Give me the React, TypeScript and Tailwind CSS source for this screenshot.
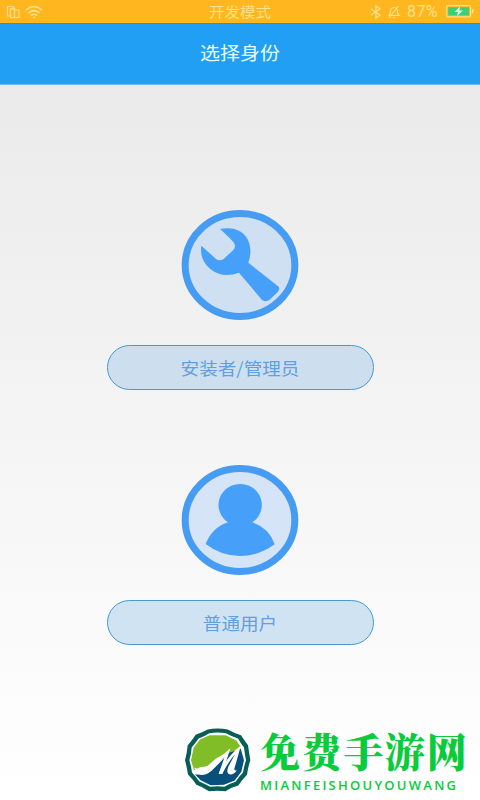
import React from "react";

const StatusBar = () => (
  <div className="relative flex h-[23px] shrink-0 items-center justify-between bg-[#ffb61f] px-[6px] text-[#ffe08c]">
    <div className="flex items-center gap-[5px]">
      <svg className="h-[14px] w-[14px]" viewBox="0 0 14 14" fill="none" stroke="currentColor" strokeWidth="1.2">
        <path d="M4 11H1.5V1.5H7L8.5 3.5" />
        <path d="M4.5 3.8H8.5V12.5H4.5ZM8.5 5H13V12.5H8.5" />
      </svg>
      <svg className="h-[14px] w-[18px]" viewBox="0 0 18 14" fill="none" stroke="currentColor" strokeWidth="1.6" strokeLinecap="round">
        <path d="M1.5 4.6Q9 -1.6 16.5 4.6M4 7.6Q9 3.6 14 7.6M6.4 10.2Q9 8.2 11.6 10.2" />
        <circle cx="9" cy="12.5" r="0.9" fill="currentColor" stroke="none" />
      </svg>
    </div>
    <span className="absolute inset-x-0 top-0 scale-y-90 text-center text-[15.5px] leading-[22px]">开发模式</span>
    <div className="flex items-center">
      <svg className="mr-[5px] h-[14px] w-[12px]" viewBox="0 0 12 14" fill="none" stroke="currentColor" strokeWidth="1.3">
        <path d="M1 4L10 10L6 13V1L10 4L1 10" />
      </svg>
      <svg className="mr-[6px] h-[14px] w-[14px]" viewBox="0 0 14 14" fill="none" stroke="currentColor" strokeWidth="1.2">
        <path d="M2 10.5Q3.5 9 3.5 6Q4 2.5 7 2.5Q10 2.5 10.5 6Q10.5 9 12 10.5ZM6 12.5H8M11.5 1L2 13" />
      </svg>
      <span className="mr-[6px] w-[33px] font-['Roboto'] text-[16px] leading-[22px] tracking-[0.4px]">87%</span>
      <svg className="h-[13px] w-[28px]" viewBox="0 0 28 13">
        <rect x="0.6" y="0.6" width="24" height="11.3" rx="1.5" fill="none" stroke="currentColor" strokeWidth="1.2" />
        <rect x="2.3" y="2.2" width="20.6" height="8.2" fill="#3cce78" />
        <path d="M26 4H27.4V8.5H26Z" fill="currentColor" />
        <path d="M14 1.5L8.5 7H12L11 11L17 5.5H13.5Z" fill="#e4ffdc" />
      </svg>
    </div>
  </div>
);

const Ring = ({ fill, children }: { fill: string; children: React.ReactNode }) => (
  <svg className="h-[110px] w-[118px]" viewBox="33 30 354 330">
    <ellipse cx="210" cy="195" rx="164.5" ry="154.5" fill={fill} stroke="#469cf2" strokeWidth="21" />
    <g fill="#469ff8">{children}</g>
  </svg>
);

const RoleButton = ({ className, children }: { className: string; children: React.ReactNode }) => (
  <button
    className={`mt-[25px] h-[45px] w-[267px] rounded-full border border-[#4798d2] text-[18.6px] text-[#5f9fe2] ${className}`}
  >
    <span className="inline-block scale-y-92">{children}</span>
  </button>
);

const Watermark = () => (
  <div className="flex pl-[184px] text-[#09cb3b]">
    <svg className="h-[65px] w-[67px] shrink-0" viewBox="27 26 201 194">
      <path
        d="M98 30Q128 24 158 30Q176 40 198 47Q208 62 219 77Q222 97 226 122Q219 142 216 166Q202 180 190 198Q170 203 152 215Q128 212 102 215Q84 203 64 196Q54 180 39 165Q36 145 30 122Q36 101 38 78Q51 63 62 46Q80 40 98 30Z"
        fill="#075e55"
      />
      <path
        d="M103 41Q128 37 153 41Q171 51 189 57Q197 71 207 84Q209 102 213 122Q207 140 204 159Q192 171 182 187Q165 192 148 202Q128 199 106 202Q89 193 73 186Q63 172 51 159Q49 140 43 122Q49 103 50 84Q61 71 71 57Q87 51 103 41Z"
        fill="#fff"
      />
      <path d="M104 47H152L184 63L197 82L165 101L117 137L75 143L57 152L48 122L56 85L75 60Z" fill="#80bd27" />
      <path d="M72 165Q99 167 119 145L163 100L197 87L207 122L199 157L179 183L147 196L107 197L77 182L60 165Z" fill="#07507b" />
      <path
        d="M57 145Q62 144 67 149Q77 155 91 145L122 118Q148 105 166 86L142 163H131L149 112Q128 128 115 147Q99 168 78 166Q62 163 58 153L66 155Z"
        fill="#fff"
      />
      <path
        d="M131 163Q150 118 198 77L178 148Q178 156 186 152Q172 170 160 163Q154 157 160 142L180 104Q158 130 142 163Z"
        fill="#fff"
      />
    </svg>
    <div className="pl-[9px]">
      <div className="-mt-[6px] flex h-[56px] items-center whitespace-nowrap font-['Noto_Serif_CJK_SC','Noto_Sans_CJK_SC',serif] text-[40px] leading-[48px] font-black tracking-[1.7px]">
        免费手游网
      </div>
      <div className="whitespace-nowrap font-['Open_Sans','Noto_Sans',sans-serif] text-[13px] leading-[14px] font-semibold tracking-[2.25px]">
        MIANFEISHOUYOUWANG
      </div>
    </div>
  </div>
);

const App = () => (
  <div className="flex h-[800px] w-[480px] flex-col overflow-hidden bg-linear-to-b from-[#e8e8e8] to-white font-['Noto_Sans_CJK_SC',sans-serif]">
    <StatusBar />
    <header className="flex h-[62px] shrink-0 items-center justify-center border-t border-b border-t-[#6a8178] border-b-[#6fbbec] bg-[#209ff4] pb-[2px] text-[20px] text-[#e8fbff]">
      <span className="inline-block scale-y-90">选择身份</span>
    </header>
    <main className="flex flex-col items-center pt-[125px]">
      <Ring fill="#cfe0f2">
        <path d="M150 87Q186 80 212 95C239 111 249 150 235 188L326 260Q330 266 324 275L298 300Q286 307 276 300L207 218Q158 237 121 207Q88 180 94 137L139 178Q149 184 160 178L190 150Q197 143 194 133Q190 123 150 87Z" />
      </Ring>
      <RoleButton className="bg-[#cddfef]">安装者/管理员</RoleButton>
      <div className="mt-[75px] flex flex-col items-center">
        <Ring fill="#d5e5f7">
          <path d="M174 202A65 63 0 1 1 247 202Q298 218 314 268Q266 303 210 303Q152 302 107 267Q126 218 174 202Z" />
        </Ring>
        <RoleButton className="bg-[#d0e3f3]">普通用户</RoleButton>
      </div>
    </main>
    <div className="pt-[83px]">
      <Watermark />
    </div>
  </div>
);

export default App;
